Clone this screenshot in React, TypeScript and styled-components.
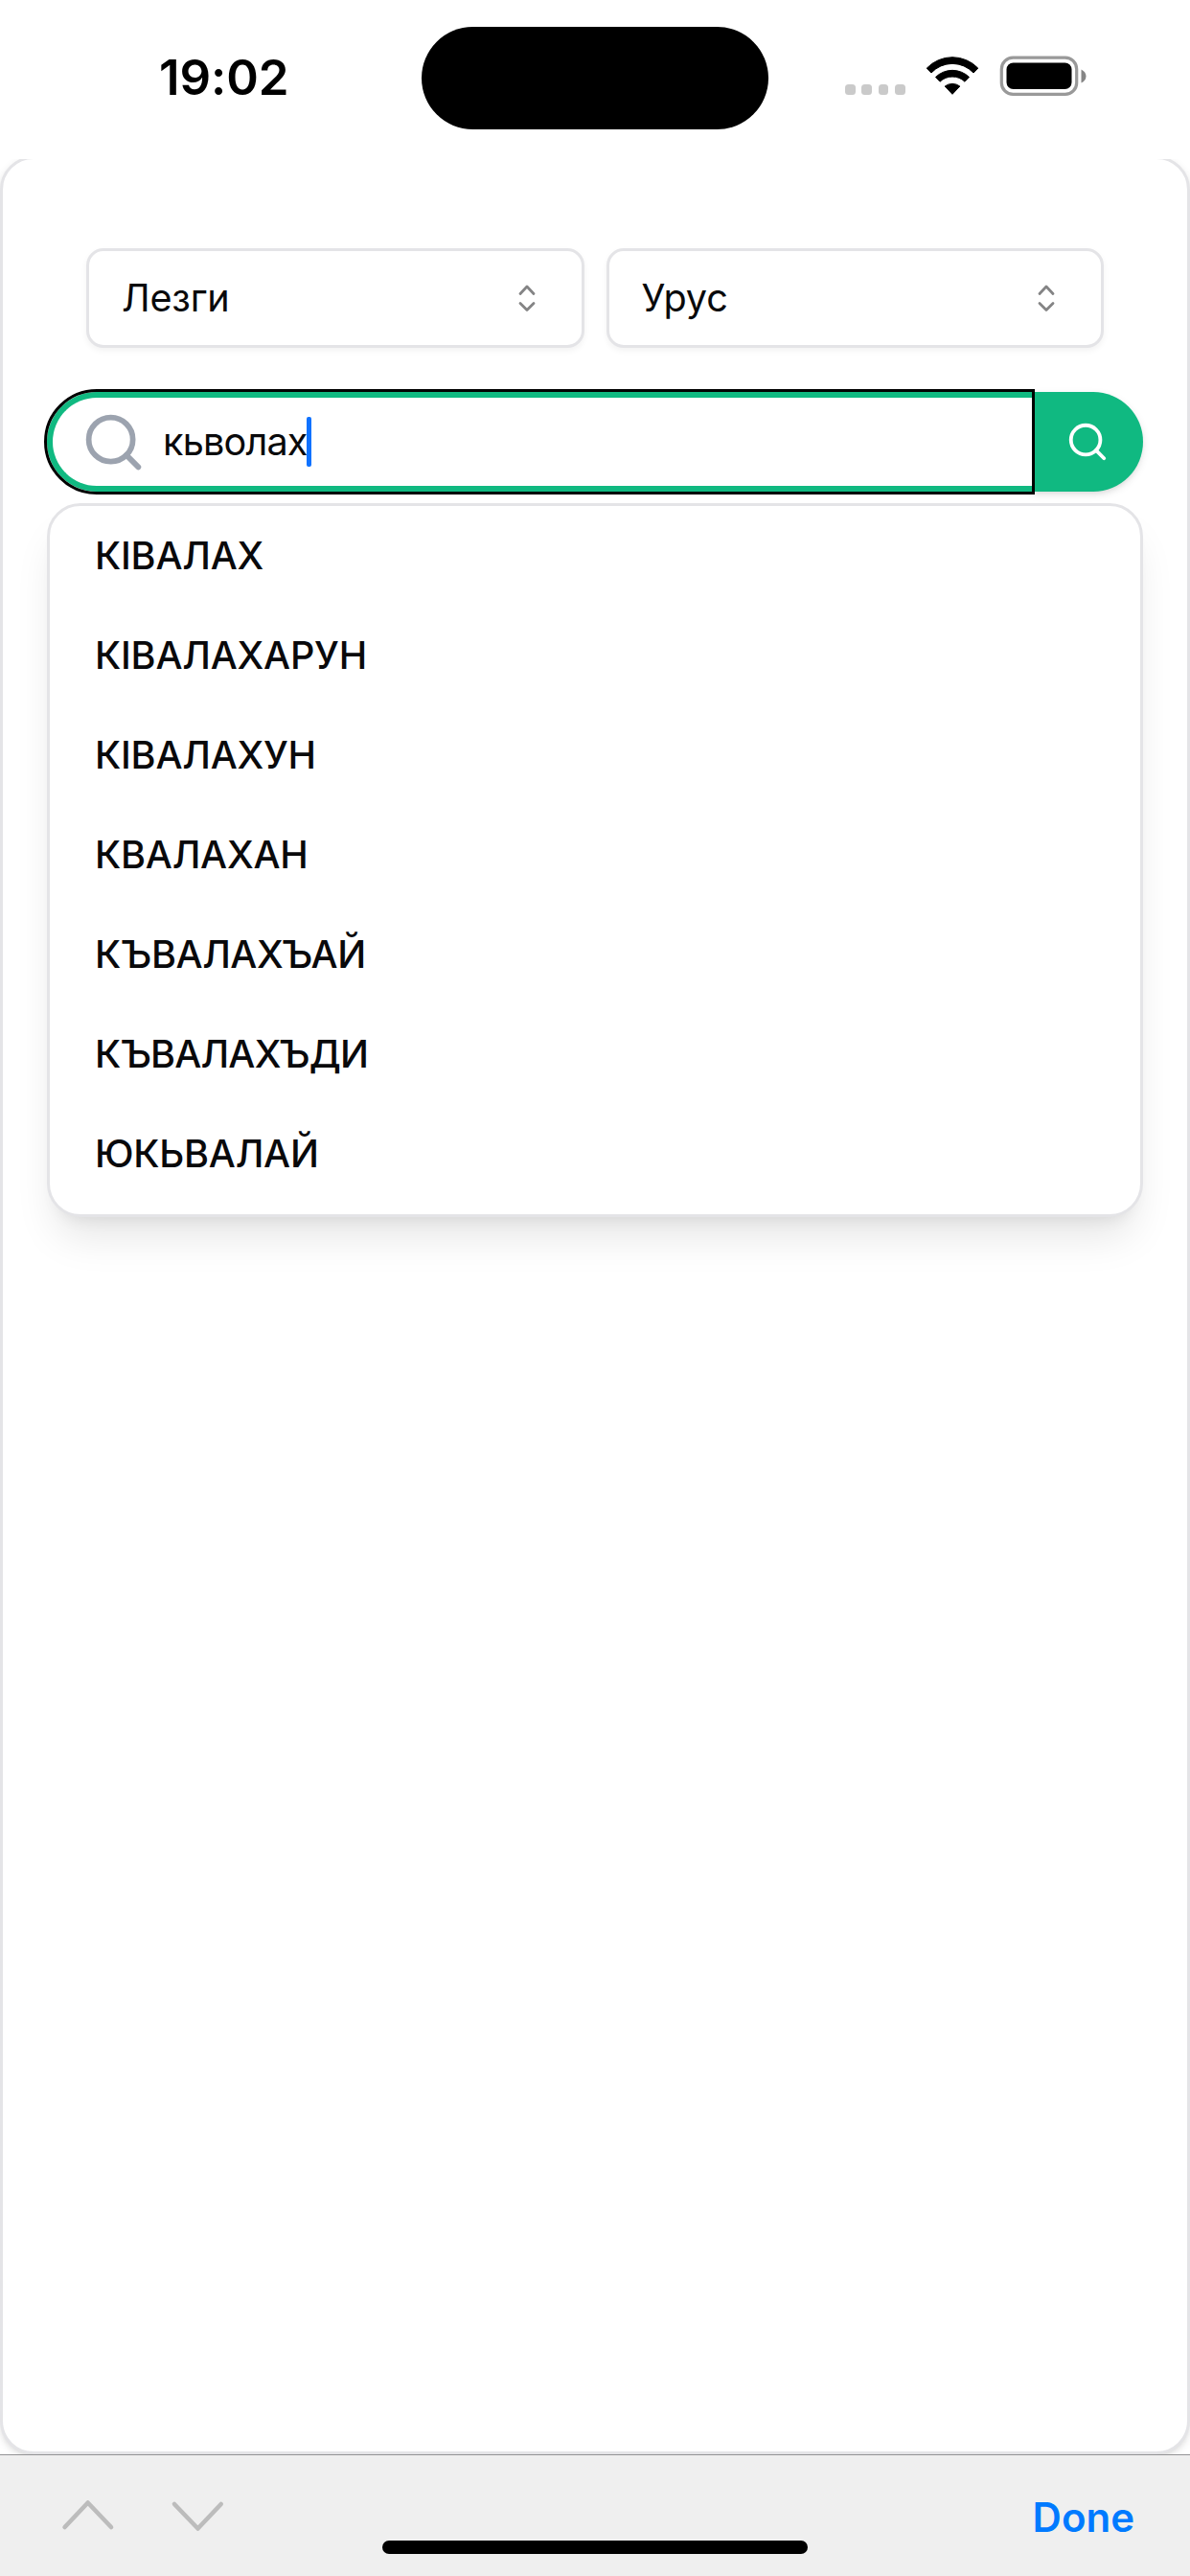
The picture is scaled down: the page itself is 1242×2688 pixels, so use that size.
import React from "react";
import styled, { createGlobalStyle } from "styled-components";
import { Search } from "lucide-react";

const Global = createGlobalStyle`
  * { box-sizing: border-box; }
  html, body { margin: 0; padding: 0; background: #fff; }
  body { font-family: Inter, "Liberation Sans", sans-serif; color: #09090b; }
`;

const Screen = styled.div`
  width: 1242px;
  height: 2688px;
  display: flex;
  flex-direction: column;
  overflow: hidden;
  background: #fff;
`;

const StatusBar = styled.header`
  flex: none;
  height: 166px;
  display: grid;
  grid-template-columns: 440px 362px 1fr;
  align-items: start;
`;

const Clock = styled.time`
  padding: 50px 0 0 166px;
  font-size: 51px;
  line-height: 62px;
  font-weight: 600;
  letter-spacing: -0.1px;
  color: #000;
`;

const Island = styled.div`
  margin-top: 28px;
  height: 107px;
  border-radius: 54px;
  background: #000;
`;

const Indicators = styled.div`
  display: flex;
  align-items: flex-start;
  padding: 58px 0 0 80px;
`;

const Signal = styled.div`
  display: flex;
  gap: 6.5px;
  padding-top: 30px;
  width: 84px;
`;

const Dot = styled.span`
  width: 10.8px;
  height: 11px;
  border-radius: 3.5px;
  background: #cacaca;
`;

const Glyph = styled.svg`
  display: block;
  flex: none;
  overflow: visible;
`;

const Viewport = styled.main`
  flex: 1;
  min-height: 0;
  overflow: hidden;
`;

const Card = styled.section`
  height: 2398px;
  margin-top: -3px;
  border: 3px solid #e4e4e7;
  border-radius: 35px;
  background: #fff;
  box-shadow: 0 3px 9px rgba(0, 0, 0, 0.1), 0 3px 6px -3px rgba(0, 0, 0, 0.1);
  padding: 93px 46px 0;
`;

const Selects = styled.div`
  display: grid;
  grid-template-columns: 1fr 1fr;
  gap: 23px;
  padding: 0 41px;
`;

const Select = styled.button`
  height: 104px;
  display: flex;
  align-items: center;
  justify-content: space-between;
  padding: 0 34px;
  border: 3px solid #e4e4e7;
  border-radius: 18px;
  background: #fff;
  box-shadow: 0 3px 6px rgba(0, 0, 0, 0.05);
  font: 400 39.6px/58px Inter, sans-serif;
  letter-spacing: -0.2px;
  color: #09090b;
`;

const SearchRow = styled.div`
  display: flex;
  height: 104px;
  margin-top: 46px;
`;

const Field = styled.div`
  position: relative;
  z-index: 1;
  flex: 1;
  display: flex;
  align-items: center;
  padding-left: 29px;
  border: 6px solid #10b981;
  border-right: 0;
  border-radius: 52px 0 0 52px;
  outline: 3px solid #000;
  background: #fff;
  color: #9ca3af;
`;

const Query = styled.span`
  margin-left: 17px;
  font-size: 39.6px;
  line-height: 58px;
  letter-spacing: -0.8px;
  color: #09090b;
`;

const Caret = styled.i`
  width: 5px;
  height: 52px;
  margin-left: -1px;
  border-radius: 2px;
  background: #0f72ff;
`;

const Submit = styled.button`
  width: 116px;
  display: flex;
  align-items: center;
  justify-content: center;
  padding: 0;
  border: 0;
  border-radius: 0 52px 52px 0;
  background: #10b981;
  color: #fff;
  box-shadow: 0 3px 9px rgba(0, 0, 0, 0.1), 0 3px 6px -3px rgba(0, 0, 0, 0.1);
`;

const Suggestions = styled.ul`
  list-style: none;
  margin: 12px 0 0;
  padding: 0 0 11px;
  border: 3px solid #e4e4e7;
  border-radius: 35px;
  background: #fff;
  box-shadow: 0 29px 43px -9px rgba(0, 0, 0, 0.1), 0 12px 17px -12px rgba(0, 0, 0, 0.1);
`;

const Suggestion = styled.li<{ $tracking: number }>`
  height: 104px;
  padding: 0 47px;
  font-size: 39.6px;
  font-weight: 450;
  line-height: 104px;
  letter-spacing: ${(p) => p.$tracking}px;
`;

const Toolbar = styled.footer`
  position: relative;
  flex: none;
  height: 127px;
  display: flex;
  align-items: flex-start;
  justify-content: space-between;
  padding: 47px 58px 0 64px;
  border-top: 1px solid #939395;
  background: #efefef;
`;

const Done = styled.button`
  padding: 0;
  border: 0;
  background: none;
  font: 600 42px/36px Inter, sans-serif;
  color: #007aff;
`;

const HomeIndicator = styled.div`
  position: absolute;
  left: 399px;
  bottom: 23px;
  width: 444px;
  height: 14px;
  border-radius: 7px;
  background: #000;
`;

const words = [
  { text: "КІВАЛАХ", tracking: -0.2 },
  { text: "КІВАЛАХАРУН", tracking: -0.2 },
  { text: "КІВАЛАХУН", tracking: -0.2 },
  { text: "КВАЛАХАН", tracking: -0.2 },
  { text: "КЪВАЛАХЪАЙ", tracking: -0.4 },
  { text: "КЪВАЛАХЪДИ", tracking: -0.8 },
  { text: "ЮКЬВАЛАЙ", tracking: -0.2 },
];

const SortIcon = () => (
  <Glyph width="46" height="46" viewBox="0 0 46 46" fill="none" stroke="#848485" strokeWidth="2.8" strokeLinecap="round" strokeLinejoin="round">
    <path d="M16 18.5 23 11l7 7.5M16 28.5l7 7 7-7" />
  </Glyph>
);

export default function App() {
  return (
    <Screen>
      <Global />
      <StatusBar>
        <Clock>19:02</Clock>
        <Island />
        <Indicators>
          <Signal>
            <Dot /><Dot /><Dot /><Dot />
          </Signal>
          <Glyph width="56" height="42" viewBox="0 0 56 42" stroke="#000" strokeWidth="1" strokeLinejoin="round">
            <path d="M1.2 13.2A37 37 0 0 1 54.8 13.2L50 18A30 30 0 0 0 6 18Z" />
            <path d="M10.5 22.5A25 25 0 0 1 45.5 22.5L41 27.2A19 19 0 0 0 15 27.2Z" />
            <path d="M20.2 32A13 13 0 0 1 35.8 32L28 40.3Z" />
          </Glyph>
          <Glyph width="92" height="42" viewBox="-21.5 0 92 42">
            <rect x="1.8" y="2.2" width="78.4" height="38.2" rx="12" fill="none" stroke="#999" strokeWidth="3.2" />
            <rect x="7" y="7.5" width="68" height="27.5" rx="7" />
            <path d="M85 14.5q5 2.5 5 7t-5 7Z" fill="#858585" />
          </Glyph>
        </Indicators>
      </StatusBar>
      <Viewport>
        <Card>
          <Selects>
            <Select>Лезги<SortIcon /></Select>
            <Select>Урус<SortIcon /></Select>
          </Selects>
          <SearchRow>
            <Field>
              <Search size={69} strokeWidth={2} />
              <Query>кьволах</Query>
              <Caret />
            </Field>
            <Submit>
              <Search size={46} strokeWidth={2} />
            </Submit>
          </SearchRow>
          <Suggestions>
            {words.map((word) => (
              <Suggestion key={word.text} $tracking={word.tracking}>{word.text}</Suggestion>
            ))}
          </Suggestions>
        </Card>
      </Viewport>
      <Toolbar>
        <Glyph width="170" height="34" viewBox="0 0 170 34" fill="none" stroke="#bcbcbc" strokeWidth="4.6" strokeLinecap="round" strokeLinejoin="round">
          <path d="M3.6 28 27.7 2.5 52 28M118 4l24.5 25.5L166.7 4" />
        </Glyph>
        <Done>Done</Done>
        <HomeIndicator />
      </Toolbar>
    </Screen>
  );
}
